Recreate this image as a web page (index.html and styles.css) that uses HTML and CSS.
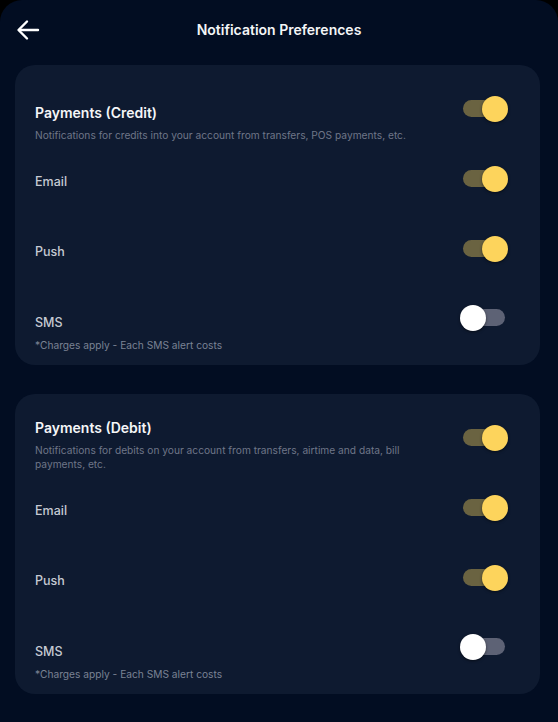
FILE: index.html
```html
<!DOCTYPE html>
<html lang="en">
<head>
  <meta charset="UTF-8" />
  <title>Notification Preferences</title>
  <meta name="viewport" content="width=device-width, initial-scale=1.0" />
  <link rel="stylesheet" href="styles.css">
</head>
<body>
  <div class="screen">
    <!-- Top bar -->
    <header class="topbar">
      <button class="back-btn" aria-label="Back">
        <svg width="24" height="24" viewBox="0 0 24 24" fill="none" stroke="#fff" stroke-width="2.4" stroke-linecap="round" stroke-linejoin="round">
          <path d="M22 12H3.5" />
          <path d="M11 3.5L2.5 12L11 20.5" />
        </svg>
      </button>
      <h1 class="page-title">Notification Preferences</h1>
    </header>

    <main class="content">
      <!-- Credit -->
      <section class="card">
        <div class="row-head">
          <div class="head-text">
            <div class="card-title">Payments (Credit)</div>
            <div class="card-desc">Notifications for credits into your account from transfers, POS payments, etc.</div>
          </div>
          <span class="switch on"><span class="track"></span><span class="thumb"></span></span>
        </div>
        <div class="option">
          <div class="option-text"><div class="option-label">Email</div></div>
          <span class="switch on"><span class="track"></span><span class="thumb"></span></span>
        </div>
        <div class="option">
          <div class="option-text"><div class="option-label">Push</div></div>
          <span class="switch on"><span class="track"></span><span class="thumb"></span></span>
        </div>
        <div class="option sms">
          <div class="option-text">
            <div class="option-label">SMS</div>
            <div class="option-note">*Charges apply - Each SMS alert costs</div>
          </div>
          <span class="switch"><span class="track"></span><span class="thumb"></span></span>
        </div>
      </section>

      <!-- Debit -->
      <section class="card">
        <div class="row-head">
          <div class="head-text">
            <div class="card-title">Payments (Debit)</div>
            <div class="card-desc">Notifications for debits on your account from transfers, airtime and data, bill payments, etc.</div>
          </div>
          <span class="switch on"><span class="track"></span><span class="thumb"></span></span>
        </div>
        <div class="option">
          <div class="option-text"><div class="option-label">Email</div></div>
          <span class="switch on"><span class="track"></span><span class="thumb"></span></span>
        </div>
        <div class="option">
          <div class="option-text"><div class="option-label">Push</div></div>
          <span class="switch on"><span class="track"></span><span class="thumb"></span></span>
        </div>
        <div class="option sms">
          <div class="option-text">
            <div class="option-label">SMS</div>
            <div class="option-note">*Charges apply - Each SMS alert costs</div>
          </div>
          <span class="switch"><span class="track"></span><span class="thumb"></span></span>
        </div>
      </section>
    </main>
  </div>
</body>
</html>
```

FILE: styles.css
```css
/* Dark navy screen with rounded top corners */
html, body {
  margin: 0;
  padding: 0;
  height: 100%;
  background: #000;
  font-family: Inter, "Noto Sans", Arial, sans-serif;
  color: #fff;
}
.screen {
  min-height: 100%;
  background: #020d22;
  border-radius: 22px 22px 0 0;
  overflow: hidden;
}
/* Top bar */
.topbar {
  position: relative;
  height: 20px;
  padding-top: 20px;
  display: flex;
  justify-content: center;
  align-items: center;
}
.back-btn {
  position: absolute;
  left: 16px;
  top: 18px;
  padding: 0;
  border: none;
  background: none;
  cursor: pointer;
  display: flex;
}
.page-title {
  margin: 0;
  font-size: 14px;
  font-weight: 600;
  line-height: 20px;
  color: #f4f5f7;
}
/* Cards */
.content {
  padding: 25px 18px 0 15px;
  display: flex;
  flex-direction: column;
  gap: 29px;
}
.card {
  background: #0e1a30;
  border-radius: 20px;
  padding: 31px 32px 13px 20px;
}
.row-head {
  height: 46px;
  display: flex;
  justify-content: space-between;
  align-items: flex-end;
}
.row-head .switch {
  align-self: flex-start;
}
.head-text {
  max-width: 395px;
}
.card-title {
  font-size: 14px;
  font-weight: 600;
  line-height: 20px;
  color: #f5f6f8;
}
.card-desc {
  margin-top: 5px;
  font-size: 10.2px;
  line-height: 14px;
  color: #6e7688;
}
.option {
  margin-top: 50px;
  display: flex;
  justify-content: space-between;
  align-items: flex-start;
}
.row-head + .option {
  margin-top: 30px;
}
.option.sms {
  margin-top: 51px;
}
.option-label {
  font-size: 12.5px;
  font-weight: 500;
  line-height: 20px;
  color: #c6cad3;
}
.option-note {
  margin-top: 5px;
  font-size: 10.2px;
  line-height: 14px;
  color: #7a8294;
}
.option .switch {
  margin-top: -6px;
}
.option.sms .switch {
  margin-top: -8px;
}
/* Toggle switch */
.switch {
  position: relative;
  flex: none;
  width: 48px;
  height: 26px;
}
.switch .track {
  position: absolute;
  left: 3px;
  right: 3px;
  top: 4px;
  height: 17px;
  border-radius: 9px;
  background: #5d6275;
}
.switch .thumb {
  position: absolute;
  left: 0;
  top: 0;
  width: 26px;
  height: 26px;
  border-radius: 50%;
  background: #fff;
  box-shadow: 0 1px 3px rgba(0, 0, 0, 0.5);
}
.switch.on .track {
  background: #6a6341;
}
.switch.on .thumb {
  left: auto;
  right: 0;
  background: #fdd45c;
}
```
